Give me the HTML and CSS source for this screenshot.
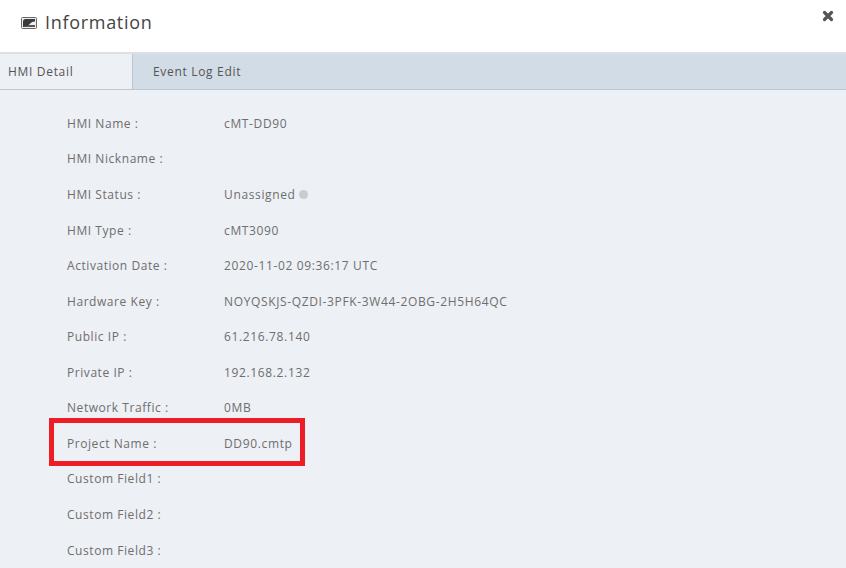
FILE: index.html
```html
<!DOCTYPE html>
<html lang="en">
<head>
<meta charset="utf-8">
<title>Information</title>
<link rel="stylesheet" href="styles.css">
</head>
<body>
<div class="dialog">
  <header class="header">
    <svg class="title-icon" width="16" height="12" viewBox="0 0 16 12" aria-hidden="true">
      <rect x="0.5" y="0.5" width="15" height="11" rx="1" fill="#eee" stroke="#666"/>
      <path d="M2 10V4.5Q2 2 4.500 2H14V4.500Q9 4.500 7 10Z" fill="#3a3a3a"/>
      <path d="M2 10H14V8H8Z" fill="#555"/>
    </svg>
    <h1 class="title">Information</h1>
    <svg class="close" width="12" height="12" viewBox="0 0 12 12" aria-hidden="true">
      <path d="M2.500 2.500L9.500 9.500M9.500 2.500L2.500 9.500" stroke="#555" stroke-width="3.200" stroke-linecap="round"/>
    </svg>
  </header>
  <nav class="tabs">
    <div class="tab active">HMI Detail</div>
    <div class="tab">Event Log Edit</div>
  </nav>
  <main class="content">
    <div class="row"><span class="label">HMI Name :</span><span class="value">cMT-DD90</span></div>
    <div class="row"><span class="label">HMI Nickname :</span><span class="value"></span></div>
    <div class="row"><span class="label">HMI Status :</span><span class="value">Unassigned<i class="dot"></i></span></div>
    <div class="row"><span class="label">HMI Type :</span><span class="value">cMT3090</span></div>
    <div class="row"><span class="label">Activation Date :</span><span class="value">2020-11-02 09:36:17 UTC</span></div>
    <div class="row"><span class="label">Hardware Key :</span><span class="value">NOYQSKJS-QZDI-3PFK-3W44-2OBG-2H5H64QC</span></div>
    <div class="row"><span class="label">Public IP :</span><span class="value">61.216.78.140</span></div>
    <div class="row"><span class="label">Private IP :</span><span class="value">192.168.2.132</span></div>
    <div class="row"><span class="label">Network Traffic :</span><span class="value">0MB</span></div>
    <div class="row highlighted"><span class="label">Project Name :</span><span class="value">DD90.cmtp</span><div class="redbox"></div></div>
    <div class="row"><span class="label">Custom Field1 :</span><span class="value"></span></div>
    <div class="row"><span class="label">Custom Field2 :</span><span class="value"></span></div>
    <div class="row"><span class="label">Custom Field3 :</span><span class="value"></span></div>
  </main>
</div>
</body>
</html>
```

FILE: styles.css
```css
html, body {
  margin: 0;
  padding: 0;
  height: 100%;
  overflow: hidden;
}
body {
  font-family: "Open Sans", sans-serif;
  background: #edf0f5;
}
.dialog {
  display: flex;
  flex-direction: column;
  height: 568px;
}
.header {
  position: relative;
  display: flex;
  align-items: center;
  gap: 8px;
  height: 52px;
  padding: 0 0 8px 21px;
  box-sizing: border-box;
  background: #fff;
  flex: none;
}
.title-icon {
  flex: none;
  margin-top: 1px;
}
.title {
  margin: 0;
  font-size: 18px;
  font-weight: 400;
  letter-spacing: 0.7px;
  color: #444;
}
.close {
  position: absolute;
  top: 10px;
  right: 12px;
}
.tabs {
  display: flex;
  height: 38px;
  box-sizing: border-box;
  flex: none;
  background: #d2dce6;
  border-top: 2px solid #dcdfe3;
  border-bottom: 1px solid #bcc7d2;
}
.tab {
  padding: 0 20px;
  font-size: 12px;
  letter-spacing: 0.68px;
  line-height: 35px;
  color: #555;
}
.tab.active {
  width: 133px;
  box-sizing: border-box;
  padding: 0 8px;
  background: #edf0f5;
  border-right: 1px solid #bcc7d2;
  margin-bottom: -1px;
  border-bottom: 1px solid #bcc7d2;
}
.content {
  padding-top: 15.95px;
  font-size: 12px;
  color: #6e6e6e;
}
.row {
  position: relative;
  display: flex;
  height: 35.55px;
  line-height: 35.55px;
  padding-left: 67px;
}
.label {
  width: 157px;
  flex: none;
  letter-spacing: 0.56px;
}
.value {
  letter-spacing: 0.64px;
}
.dot {
  display: inline-block;
  width: 9px;
  height: 9px;
  margin-left: 3px;
  border-radius: 50%;
  background: #ccc;
}
.redbox {
  position: absolute;
  left: 49px;
  top: -8px;
  width: 256px;
  height: 48px;
  box-sizing: border-box;
  border: 5px solid #ee1c25;
}
```
